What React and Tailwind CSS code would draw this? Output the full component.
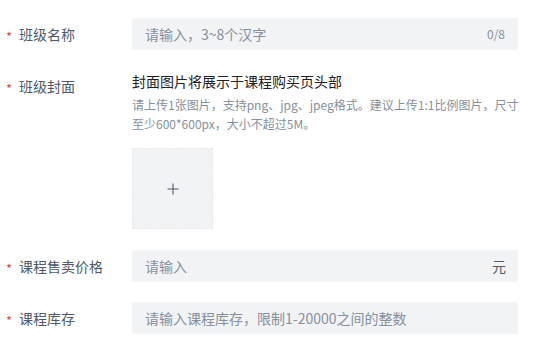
import React from "react";

function Label({ children }) {
  return (
    <div className="w-[132px] shrink-0 flex items-start pl-[6px] h-[32px] leading-[32px] text-[14px] text-[#4e5969]">
      <span className="relative top-[3px] text-[#f53f3f] w-[13px] text-[13px]">*</span>
      <span>{children}</span>
    </div>
  );
}

function Input({ placeholder, suffix }) {
  return (
    <div className="w-[386px] h-[32px] bg-[#f2f3f5] rounded-[2px] flex items-center px-[13px] text-[14px]">
      <span className="flex-1 text-[#86909c]">{placeholder}</span>
      {suffix}
    </div>
  );
}

export default function App() {
  return (
    <div
      className="w-[534px] h-[348px] bg-white pt-[18px] flex flex-col gap-[20px]"
      style={{ fontFamily: '"Noto Sans CJK SC", "Noto Sans", sans-serif' }}
    >
      <div className="flex">
        <Label>班级名称</Label>
        <Input
          placeholder="请输入，3~8个汉字"
          suffix={<span className="text-[12px] text-[#86909c]">0/8</span>}
        />
      </div>
      <div className="flex">
        <Label>班级封面</Label>
        <div className="w-[386px] flex flex-col">
          <div className="text-[14px] leading-[22px] text-[#1d2129]">封面图片将展示于课程购买页头部</div>
          <div className="mt-[3px] text-[12px] leading-[19px] text-[#86909c] whitespace-nowrap tracking-[0px]">
            请上传1张图片，支持png、jpg、jpeg格式。建议上传1:1比例图片，尺寸
            <br />
            至少600*600px，大小不超过5M。
          </div>
          <div className="mt-[15px] w-[81px] h-[81px] bg-[#f2f3f5] border border-dashed border-[#e8e9ec] flex items-center justify-center">
            <svg width="12" height="12" viewBox="0 0 12 12">
              <path d="M6 0.5V11.5M0.5 6H11.5" stroke="#4e5969" strokeWidth="1.1" />
            </svg>
          </div>
        </div>
      </div>
      <div className="flex mt-[1px]">
        <Label>课程售卖价格</Label>
        <Input
          placeholder="请输入"
          suffix={<span className="text-[14px] text-[#4e5969] mr-[-1px]">元</span>}
        />
      </div>
      <div className="flex">
        <Label>课程库存</Label>
        <Input placeholder="请输入课程库存，限制1-20000之间的整数" />
      </div>
    </div>
  );
}
